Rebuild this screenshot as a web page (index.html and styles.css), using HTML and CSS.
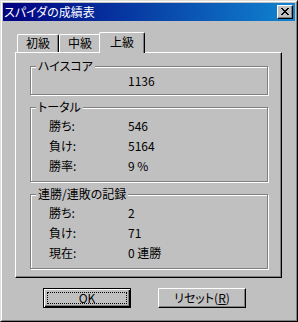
FILE: index.html
```html
<!DOCTYPE html>
<html lang="ja">
<head>
<meta charset="utf-8">
<link rel="stylesheet" href="styles.css">
</head>
<body>
<div class="window">
  <div class="frame">
    <div class="titlebar">
      <span class="title">スパイダの成績表</span>
      <div class="close">
        <svg width="8" height="7" viewBox="0 0 8 7" shape-rendering="crispEdges">
          <path d="M0 0h2v1h-2zM6 0h2v1h-2zM1 1h2v1h-2zM5 1h2v1h-2zM2 2h4v1h-4zM3 3h2v1h-2zM2 4h4v1h-4zM1 5h2v1h-2zM5 5h2v1h-2zM0 6h2v1h-2zM6 6h2v1h-2z" fill="#000"/>
        </svg>
      </div>
    </div>
    <div class="client">
      <div class="tabs">
        <div class="tab">初級</div>
        <div class="tab">中級</div>
        <div class="tab active">上級</div>
      </div>
      <div class="panel">
        <div class="group g-small">
          <div class="legend">ハイスコア</div>
          <div class="row first"><span class="k"></span><span class="v">1136</span></div>
        </div>
        <div class="group">
          <div class="legend">トータル</div>
          <div class="row"><span class="k">勝ち:</span><span class="v">546</span></div>
          <div class="row"><span class="k">負け:</span><span class="v">5164</span></div>
          <div class="row"><span class="k">勝率:</span><span class="v">9 %</span></div>
        </div>
        <div class="group">
          <div class="legend">連勝/連敗の記録</div>
          <div class="row"><span class="k">勝ち:</span><span class="v">2</span></div>
          <div class="row"><span class="k">負け:</span><span class="v">71</span></div>
          <div class="row"><span class="k">現在:</span><span class="v">0 連勝</span></div>
        </div>
      </div>
      <div class="buttons">
        <div class="btn default"><span class="focus">OK</span></div>
        <div class="btn">リセット(<u>R</u>)</div>
      </div>
    </div>
  </div>
</div>
</body>
</html>
```

FILE: styles.css
```css
html, body {
  margin: 0;
  padding: 0;
  background: #c0c0c0;
}
body {
  font-family: "Noto Sans CJK JP", "Noto Sans", sans-serif;
  font-size: 12px;
  font-feature-settings: "palt";
  color: #000;
}
.window {
  width: 298px;
  height: 322px;
  box-sizing: border-box;
  border: 1px solid;
  border-color: #dfdfdf #000 #000 #dfdfdf;
  background: #c0c0c0;
}
.frame {
  height: 100%;
  box-sizing: border-box;
  border: 1px solid;
  border-color: #fff #808080 #808080 #fff;
  padding: 1px;
  display: flex;
  flex-direction: column;
}
.titlebar {
  height: 18px;
  flex: none;
  background: linear-gradient(to right, #000080, #1084d0);
  display: flex;
  align-items: center;
  justify-content: space-between;
  padding: 0 2px 0 1px;
}
.title {
  color: #fff;
  font-size: 12px;
  line-height: 18px;
}
.close {
  width: 16px;
  height: 14px;
  box-sizing: border-box;
  background: #c0c0c0;
  border: 1px solid;
  border-color: #fff #000 #000 #fff;
  box-shadow: inset -1px -1px 0 #808080;
  display: flex;
  align-items: center;
  justify-content: center;
  padding: 0 1px 1px 0;
}
.close svg { display: block; }
.client {
  flex: 1;
  padding: 11px 13px 0 12px;
  display: flex;
  flex-direction: column;
}
.tabs {
  display: flex;
  align-items: flex-end;
  height: 20px;
  padding-left: 2px;
}
.tab {
  width: 42px;
  height: 18px;
  box-sizing: border-box;
  border: 1px solid;
  border-bottom: none;
  border-color: #fff #000 #000 #fff;
  border-radius: 2px 2px 0 0;
  box-shadow: inset -1px 0 0 #808080;
  background: #c0c0c0;
  text-align: center;
  line-height: 16px;
}
.tab.active {
  width: 46px;
  height: 21px;
  margin: 0 -2px -1px;
  line-height: 18px;
  position: relative;
  z-index: 1;
}
.panel {
  height: 226px;
  box-sizing: border-box;
  border: 1px solid;
  border-color: #fff #000 #000 #fff;
  box-shadow: inset -1px -1px 0 #808080;
  padding: 13px 13px 0 14px;
  display: flex;
  flex-direction: column;
  gap: 12px;
}
.group {
  height: 75px;
  box-sizing: border-box;
  border: 1px solid #808080;
  box-shadow: inset 1px 1px 0 #fff, 1px 1px 0 #fff;
  width: 238px;
}
.group.g-small {
  height: 29px;
}
.legend {
  width: fit-content;
  margin: -8px 0 0 5px;
  padding: 0 2px;
  height: 14px;
  line-height: 14px;
  background: #c0c0c0;
}
.row {
  display: flex;
  height: 20px;
  line-height: 20px;
  padding-left: 18px;
}
.legend + .row { margin-top: 2px; }
.row.first {
  margin-top: 0;
  height: 16px;
  line-height: 16px;
}
.k { width: 79px; flex: none; }
.v { flex: none; }
.buttons {
  display: flex;
  margin-top: 10px;
  padding-left: 28px;
  gap: 27px;
}
.btn {
  width: 88px;
  height: 20px;
  box-sizing: border-box;
  border: 1px solid;
  border-color: #fff #000 #000 #fff;
  box-shadow: inset -1px -1px 0 #808080;
  text-align: center;
  line-height: 18px;
}
.btn.default {
  border: 1px solid #000;
  box-shadow: inset 1px 1px 0 #fff, inset -1px -1px 0 #000, inset -2px -2px 0 #808080;
  display: flex;
  padding: 3px 3px 3px 3px;
}
.focus {
  flex: 1;
  border: 1px dotted #000;
  line-height: 10px;
}
```
